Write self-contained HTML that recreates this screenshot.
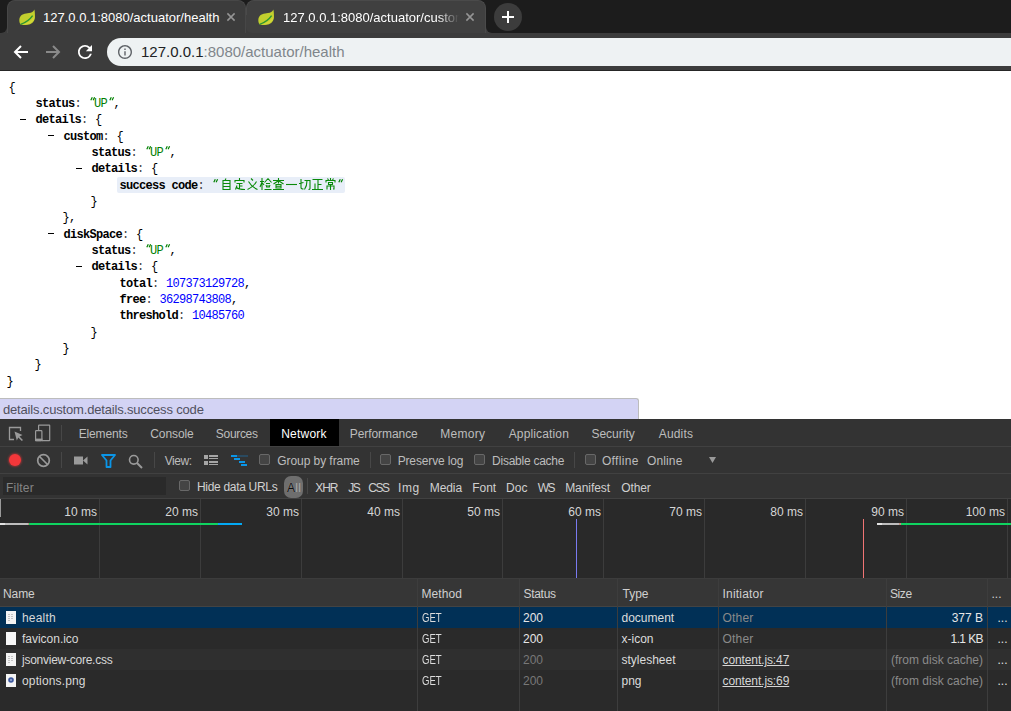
<!DOCTYPE html>
<html><head><meta charset="utf-8">
<style>
*{margin:0;padding:0;box-sizing:border-box}
html,body{width:1011px;height:711px;overflow:hidden;background:#fff;font-family:"Liberation Sans",sans-serif}
.a{position:absolute}
.ttl{position:absolute;color:#fff;font-size:13px;white-space:nowrap;overflow:hidden;line-height:16px}
.j{position:absolute;font-family:"Liberation Mono",monospace;font-size:12px;line-height:16px;color:#000;white-space:pre;letter-spacing:-0.7px}
.k{font-weight:bold}
.s{color:#008000}
.n{color:#0000ff}
.dtx{position:absolute;color:#bdbdbd;font-size:12px;line-height:14px;white-space:nowrap}
.hl{position:absolute;height:1px;background:#414141}
.vl{position:absolute;width:1px;background:#414141}
.cb{position:absolute;width:11px;height:11px;border:1px solid #686868;border-radius:2px;background:#444}
</style></head><body>
<!-- frame -->
<div class="a" style="left:0;top:0;width:1011px;height:33px;background:#1c1c1c"></div>
<!-- tab2 -->
<div class="a" style="left:478px;top:25px;width:16px;height:8px;background:#404040"></div>
<div class="a" style="left:486px;top:15px;width:8px;height:18px;background:#1c1c1c;border-bottom-left-radius:6px"></div>
<div class="a" style="left:246px;top:0;width:240px;height:33px;background:#404040;border-radius:8px 8px 0 0;border:1px solid #4a4a4a;border-bottom:none"></div>
<!-- tab1 -->
<div class="a" style="left:0;top:25px;width:254px;height:8px;background:#3c3c3c"></div>
<div class="a" style="left:0;top:15px;width:7px;height:18px;background:#1c1c1c;border-bottom-right-radius:6px"></div>
<div class="a" style="left:246px;top:15px;width:10px;height:18px;background:#404040;border-bottom-left-radius:6px"></div>
<div class="a" style="left:7px;top:0;width:239px;height:33px;background:#3c3c3c;border-radius:8px 8px 0 0;border:1px solid #474747;border-bottom:none"></div>
<!-- leaf icons -->
<svg class="a" style="left:19px;top:9px" width="17" height="17" viewBox="0 0 17 17">
<path d="M15.3,0.4 C14.5,2.5 12.5,3.6 10,4 C6,4.5 2,5 0.6,9 C-0.2,12 0.8,14.8 1.8,15.6 C4,16.2 9,16 11.5,15 C14.5,13.5 16,11 16,7.5 C16,4.5 15.8,2 15.3,0.4 Z" fill="#c2cf2e"/>
<path d="M2.5,15.6 C6,15.8 10,15.2 12.5,13.5 C14.8,11.8 15.6,9.5 15.4,7.5 C13,11 9,14 2.5,15.6 Z" fill="#d2d636"/>
<path d="M1.6,15.3 C5,14.2 9.5,12.5 13.6,6.6" stroke="#2a9632" stroke-width="1.4" fill="none"/>
</svg>
<svg class="a" style="left:258px;top:9px" width="17" height="17" viewBox="0 0 17 17">
<path d="M15.3,0.4 C14.5,2.5 12.5,3.6 10,4 C6,4.5 2,5 0.6,9 C-0.2,12 0.8,14.8 1.8,15.6 C4,16.2 9,16 11.5,15 C14.5,13.5 16,11 16,7.5 C16,4.5 15.8,2 15.3,0.4 Z" fill="#c2cf2e"/>
<path d="M2.5,15.6 C6,15.8 10,15.2 12.5,13.5 C14.8,11.8 15.6,9.5 15.4,7.5 C13,11 9,14 2.5,15.6 Z" fill="#d2d636"/>
<path d="M1.6,15.3 C5,14.2 9.5,12.5 13.6,6.6" stroke="#2a9632" stroke-width="1.4" fill="none"/>
</svg>
<div class="ttl" style="left:43px;top:10px;width:180px">127.0.0.1:8080/actuator/health</div>
<div class="ttl" style="left:283px;top:10px;width:176px;-webkit-mask-image:linear-gradient(90deg,#000 155px,transparent 176px)">127.0.0.1:8080/actuator/custom</div>
<!-- close x -->
<svg class="a" style="left:226px;top:12px" width="10" height="10" viewBox="0 0 10 10"><path d="M1.4,1.4 L8.6,8.6 M8.6,1.4 L1.4,8.6" stroke="#959595" stroke-width="1.5"/></svg>
<svg class="a" style="left:465px;top:12px" width="10" height="10" viewBox="0 0 10 10"><path d="M1.4,1.4 L8.6,8.6 M8.6,1.4 L1.4,8.6" stroke="#959595" stroke-width="1.5"/></svg>
<!-- new tab -->
<div class="a" style="left:494px;top:3px;width:28px;height:28px;border-radius:14px;background:#3c3c3c"></div>
<svg class="a" style="left:502px;top:11px" width="12" height="12" viewBox="0 0 12 12"><path d="M6,0 V12 M0,6 H12" stroke="#fff" stroke-width="2"/></svg>
<!-- toolbar -->
<div class="a" style="left:0;top:33px;width:1011px;height:37px;background:#3c3c3c"></div>
<div class="a" style="left:0;top:70px;width:1011px;height:1px;background:#262626"></div>
<svg class="a" style="left:13px;top:44px" width="16" height="16" viewBox="0 0 16 16"><path d="M15,8 H2.5 M8,2 L2,8 L8,14" stroke="#fff" stroke-width="2" fill="none"/></svg>
<svg class="a" style="left:45px;top:44px" width="16" height="16" viewBox="0 0 16 16"><path d="M1,8 H13.5 M8,2 L14,8 L8,14" stroke="#8a8a8a" stroke-width="2" fill="none"/></svg>
<svg class="a" style="left:78px;top:45px" width="14" height="14" viewBox="4 4 16 16"><path d="M17.65 6.35A7.958 7.958 0 0 0 12 4c-4.42 0-7.99 3.58-7.99 8s3.57 8 7.99 8c3.73 0 6.840-2.55 7.730-6h-2.08A5.99 5.99 0 0 1 12 18c-3.31 0-6-2.69-6-6s2.69-6 6-6c1.66 0 3.14.69 4.220 1.780L13 11h7V4l-2.35 2.35z" fill="#fff"/></svg>
<div class="a" style="left:107px;top:38px;width:930px;height:28px;background:#eef2f3;border-radius:14px"></div>
<svg class="a" style="left:118px;top:45px" width="14" height="14" viewBox="2 2 20 20"><path d="M11 7h2v2h-2zm0 4h2v6h-2zm1-9C6.48 2 2 6.48 2 12s4.48 10 10 10 10-4.48 10-10S17.52 2 12 2zm0 18c-4.410 0-8-3.590-8-8s3.590-8 8-8 8 3.590 8 8-3.590 8-8 8z" fill="#5f6368"/></svg>
<div class="a" style="left:141px;top:37px;font-size:15px;line-height:29px;white-space:nowrap;color:#202124">127.0.0.1<span style="color:#80868b">:8080/actuator/health</span></div>
<!-- page -->
<div class="a" style="left:0;top:71px;width:1011px;height:348px;background:#fff"></div>
<div class="j" style="left:8.5px;top:79.80px">{</div>
<div class="j k" style="left:35.5px;top:96.13px">status</div>
<div class="j" style="left:74.5px;top:96.13px;color:#444">:</div>
<svg class="a" style="left:89.5px;top:97.33px" width="6" height="5" viewBox="0 0 6 5"><path d="M2.3,0.3 L0.8,3.3 M4.6,0.3 L3.1,3.3" stroke="#008000" stroke-width="1.2"/></svg>
<div class="j s" style="left:94.0px;top:96.13px">UP</div>
<svg class="a" style="left:109.0px;top:97.33px" width="6" height="5" viewBox="0 0 6 5"><path d="M2.3,0.3 L0.8,3.3 M4.6,0.3 L3.1,3.3" stroke="#008000" stroke-width="1.2"/></svg>
<div class="j" style="left:113.5px;top:96.13px">,</div>
<div class="a" style="left:20px;top:119px;width:6px;height:1px;background:#000"></div>
<div class="j k" style="left:35.5px;top:112.47px">details</div>
<div class="j" style="left:81.0px;top:112.47px;color:#444">:</div>
<div class="j" style="left:95.0px;top:112.47px">{</div>
<div class="a" style="left:48px;top:135px;width:6px;height:1px;background:#000"></div>
<div class="j k" style="left:63.5px;top:128.80px">custom</div>
<div class="j" style="left:102.5px;top:128.80px;color:#444">:</div>
<div class="j" style="left:116.5px;top:128.80px">{</div>
<div class="j k" style="left:91.5px;top:145.13px">status</div>
<div class="j" style="left:130.5px;top:145.13px;color:#444">:</div>
<svg class="a" style="left:145.5px;top:146.33px" width="6" height="5" viewBox="0 0 6 5"><path d="M2.3,0.3 L0.8,3.3 M4.6,0.3 L3.1,3.3" stroke="#008000" stroke-width="1.2"/></svg>
<div class="j s" style="left:150.0px;top:145.13px">UP</div>
<svg class="a" style="left:165.0px;top:146.33px" width="6" height="5" viewBox="0 0 6 5"><path d="M2.3,0.3 L0.8,3.3 M4.6,0.3 L3.1,3.3" stroke="#008000" stroke-width="1.2"/></svg>
<div class="j" style="left:169.5px;top:145.13px">,</div>
<div class="a" style="left:76px;top:168px;width:6px;height:1px;background:#000"></div>
<div class="j k" style="left:91.5px;top:161.47px">details</div>
<div class="j" style="left:137.0px;top:161.47px;color:#444">:</div>
<div class="j" style="left:151.0px;top:161.47px">{</div>
<div class="a" style="left:117px;top:176.5px;width:228px;height:16px;background:#e8eef8;border-radius:2px"></div>
<div class="j k" style="left:119.5px;top:177.80px">success code</div>
<div class="j" style="left:197.5px;top:177.80px;color:#444">:</div>
<svg class="a" style="left:212.5px;top:179.00px" width="6" height="5" viewBox="0 0 6 5"><path d="M2.3,0.3 L0.8,3.3 M4.6,0.3 L3.1,3.3" stroke="#008000" stroke-width="1.2"/></svg>
<svg class="a" style="left:220.0px;top:178px" width="118" height="13" viewBox="0 0 118 13"><g stroke="#0a8a0a" stroke-width="1.1" fill="none"><path transform="translate(0.5,0)" d="M5.5,0.5 L4.5,2.5 M2.5,2.5 H9.5 V11.5 H2.5 Z M2.5,5.5 H9.5 M2.5,8.5 H9.5"/><path transform="translate(13.5,0)" d="M6,0 V2 M1.5,4.5 V2.5 H10.5 V4.5 M3,5.5 H9 M6,5.5 V10.5 M6,8 H9 M3.5,7.5 L2,11.5 M3,9.5 Q5,11.5 11.5,11.5"/><path transform="translate(26.5,0)" d="M4.5,0.5 L6.5,2.5 M2,3.5 Q5,9 11,11.5 M10,3.5 Q7,9 1,11.5"/><path transform="translate(39.5,0)" d="M0.5,3.5 H4.5 M2.5,0 V12 M2.5,4 L0.5,9 M3,5 L4.5,7 M8.5,0.5 L5,4.5 M8.5,0.5 L12,4.5 M6.5,5.5 H10.5 M6.5,7 L7.5,9.5 M8.5,7 V9.5 M10.5,7 L9.5,9.5 M5,11.5 H12"/><path transform="translate(52.5,0)" d="M0.5,2.5 H11.5 M6,0 V5.5 M5.5,3 L1,6 M6.5,3 L11,6 M3.5,6.5 H8.5 V10 H3.5 Z M3.5,8.2 H8.5 M0.5,11.5 H11.5"/><path transform="translate(65.5,0)" d="M0.5,6.5 H11.5"/><path transform="translate(78.5,0)" d="M0.5,5.5 L5,4.5 M2.5,1 V9.5 Q2.5,11 5,11 M6,2.5 H11.5 V10.5 Q11.5,11.5 10,11.5 M8.5,2.5 Q8.5,8 6,11.5"/><path transform="translate(91.5,0)" d="M1,1.5 H11 M6.5,1.5 V11 M6.5,6.5 H10 M3.5,5.5 V11 M0.5,11.5 H11.5"/><path transform="translate(104.5,0)" d="M6,0 V2 M3,0.5 L4,2 M9,0.5 L8,2 M1.5,4.5 V2.5 H10.5 V4.5 M4,4.5 H8 V6.5 H4 Z M2.5,11.5 V8 H9.5 V11 L8.5,11 M6,6.5 V12"/></g></svg>
<svg class="a" style="left:337.5px;top:179.00px" width="6" height="5" viewBox="0 0 6 5"><path d="M2.3,0.3 L0.8,3.3 M4.6,0.3 L3.1,3.3" stroke="#008000" stroke-width="1.2"/></svg>
<div class="j" style="left:90.5px;top:194.13px">}</div>
<div class="j" style="left:62.5px;top:210.46px">},</div>
<div class="a" style="left:48px;top:233px;width:6px;height:1px;background:#000"></div>
<div class="j k" style="left:63.5px;top:226.80px">diskSpace</div>
<div class="j" style="left:122.0px;top:226.80px;color:#444">:</div>
<div class="j" style="left:136.0px;top:226.80px">{</div>
<div class="j k" style="left:91.5px;top:243.13px">status</div>
<div class="j" style="left:130.5px;top:243.13px;color:#444">:</div>
<svg class="a" style="left:145.5px;top:244.33px" width="6" height="5" viewBox="0 0 6 5"><path d="M2.3,0.3 L0.8,3.3 M4.6,0.3 L3.1,3.3" stroke="#008000" stroke-width="1.2"/></svg>
<div class="j s" style="left:150.0px;top:243.13px">UP</div>
<svg class="a" style="left:165.0px;top:244.33px" width="6" height="5" viewBox="0 0 6 5"><path d="M2.3,0.3 L0.8,3.3 M4.6,0.3 L3.1,3.3" stroke="#008000" stroke-width="1.2"/></svg>
<div class="j" style="left:169.5px;top:243.13px">,</div>
<div class="a" style="left:76px;top:266px;width:6px;height:1px;background:#000"></div>
<div class="j k" style="left:91.5px;top:259.46px">details</div>
<div class="j" style="left:137.0px;top:259.46px;color:#444">:</div>
<div class="j" style="left:151.0px;top:259.46px">{</div>
<div class="j k" style="left:119.5px;top:275.80px">total</div>
<div class="j" style="left:152.0px;top:275.80px;color:#444">:</div>
<div class="j" style="left:166.0px;top:275.80px"><span class="n">107373129728</span>,</div>
<div class="j k" style="left:119.5px;top:292.13px">free</div>
<div class="j" style="left:145.5px;top:292.13px;color:#444">:</div>
<div class="j" style="left:159.5px;top:292.13px"><span class="n">36298743808</span>,</div>
<div class="j k" style="left:119.5px;top:308.46px">threshold</div>
<div class="j" style="left:178.0px;top:308.46px;color:#444">:</div>
<div class="j" style="left:192.0px;top:308.46px"><span class="n">10485760</span></div>
<div class="j" style="left:90.5px;top:324.80px">}</div>
<div class="j" style="left:62.5px;top:341.13px">}</div>
<div class="j" style="left:34.5px;top:357.46px">}</div>
<div class="j" style="left:6.5px;top:373.79px">}</div>
<!-- status bubble -->
<div class="a" style="left:0;top:398px;width:639px;height:21px;background:#d3d3f4;border-top:1px solid #bcbcbc;border-right:1px solid #bcbcbc;border-top-right-radius:3px"></div>
<div class="a" style="left:3px;top:402px;font-size:13px;line-height:16px;color:#50505e;white-space:nowrap;letter-spacing:-0.17px">details.custom.details.success code</div>
<!-- devtools -->
<div class="a" style="left:0;top:419px;width:1011px;height:292px;background:#333"></div>
<div class="hl" style="left:0;top:446px;width:1011px"></div>
<div class="hl" style="left:0;top:473px;width:1011px"></div>
<div class="hl" style="left:0;top:498px;width:1011px"></div>
<!-- tab bar icons -->
<svg class="a" style="left:8px;top:426px" width="16" height="16" viewBox="0 0 16 16"><path d="M6,13.5 H1.5 V1.5 H12.5 V5" stroke="#9a9a9a" stroke-width="1.3" fill="none"/><path d="M6.5,5.5 L14.5,9 L11.5,10.5 L15,14 L13.8,15 L10.3,11.6 L8.8,14.5 Z" fill="#9a9a9a"/></svg>
<svg class="a" style="left:34px;top:424px" width="17" height="18" viewBox="0 0 17 18"><path d="M4.6,6 V1.6 Q4.6,1.1 5.1,1.1 H15.2 Q15.7,1.1 15.7,1.6 V16.2 Q15.7,16.7 15.2,16.7 H8" stroke="#9a9a9a" stroke-width="1.2" fill="none"/><rect x="1.6" y="6.6" width="6.3" height="10" rx="0.8" stroke="#9a9a9a" stroke-width="1.2" fill="none"/><rect x="1" y="14.6" width="7.5" height="2.6" fill="#9a9a9a"/></svg>
<div class="vl" style="left:61px;top:425px;height:16px;background:#474747"></div>
<div class="a" style="left:270px;top:419px;width:69px;height:27px;background:#000"></div>
<!-- row2 -->
<div class="a" style="left:9px;top:454px;width:12px;height:12px;border-radius:6px;background:#f3373a;box-shadow:0 0 2px 1px rgba(243,55,58,.45)"></div>
<svg class="a" style="left:36px;top:453px" width="15" height="15" viewBox="0 0 15 15"><circle cx="7.5" cy="7.5" r="5.8" stroke="#9a9a9a" stroke-width="1.7" fill="none"/><path d="M3.5,3.5 L11.5,11.5" stroke="#9a9a9a" stroke-width="1.7"/></svg>
<div class="vl" style="left:61px;top:452px;height:16px;background:#474747"></div>
<svg class="a" style="left:74px;top:456px" width="14" height="9" viewBox="0 0 14 9"><rect x="0" y="0.5" width="9" height="8" fill="#9a9a9a"/><path d="M9,4.5 L13.5,0.5 V8.5 Z" fill="#9a9a9a"/></svg>
<svg class="a" style="left:101px;top:454px" width="15" height="14" viewBox="0 0 15 14"><path d="M1,1 H14 L9.5,6.5 V13 H5.5 V6.5 Z" stroke="#0b95e6" stroke-width="1.8" fill="none" stroke-linejoin="round"/></svg>
<svg class="a" style="left:128px;top:454px" width="15" height="15" viewBox="0 0 15 15"><circle cx="5.8" cy="5.8" r="4.3" stroke="#9a9a9a" stroke-width="1.6" fill="none"/><path d="M9,9 L14,14" stroke="#9a9a9a" stroke-width="2"/></svg>
<div class="vl" style="left:154px;top:452px;height:16px;background:#474747"></div>
<svg class="a" style="left:204px;top:455px" width="14" height="11" viewBox="0 0 14 11"><path d="M0,0 H4 V4 H0 Z M5,0 H14 V2 H5 Z M5,3 H14 V4 H5 Z M0,6 H4 V10 H0 Z M5,6 H14 V8 H5 Z M5,9 H14 V10 H5 Z" fill="#a6a6a6"/></svg>
<svg class="a" style="left:231px;top:455px" width="17" height="12" viewBox="0 0 17 12"><path d="M6,0 H17 V2 H6 Z" fill="#2a4a60"/><path d="M0,0 H6 V2 H0 Z M3,3 H9 V5 H3 Z M8,6 H14 V8 H8 Z M10,9 H16 V11 H10 Z" fill="#0b95e6"/></svg>
<div class="cb" style="left:259px;top:454px"></div>
<div class="vl" style="left:370px;top:452px;height:16px;background:#474747"></div>
<div class="cb" style="left:380px;top:454px"></div>
<div class="cb" style="left:474px;top:454px"></div>
<div class="vl" style="left:574px;top:452px;height:16px;background:#474747"></div>
<div class="cb" style="left:585px;top:454px"></div>
<svg class="a" style="left:709px;top:457px" width="7" height="6" viewBox="0 0 7 6"><path d="M0,0 H7 L3.5,6 Z" fill="#9a9a9a"/></svg>
<!-- row3 -->
<div class="a" style="left:3px;top:477px;width:163px;height:18px;background:#2a2a2a"></div>
<div class="dtx" style="left:6px;top:481px;color:#858585;letter-spacing:0.2px">Filter</div>
<div class="cb" style="left:179px;top:480px"></div>
<div class="a" style="left:284px;top:476px;width:19px;height:22px;background:#6e6e6e;border-radius:7px"></div>
<div class="dtx" style="left:287px;top:481px;color:#111;letter-spacing:0.3px;text-shadow:0 0 1px rgba(255,255,255,.35)">A<span style="color:#a8a8a8;text-shadow:none">ll</span></div>
<div class="vl" style="left:307px;top:478px;height:16px;background:#474747"></div>
<!-- timeline -->
<div class="a" style="left:0;top:499px;width:1011px;height:80px;background:#292929"></div>
<div class="vl" style="left:0;top:499px;height:18px;background:#9a9a9a"></div>
<div class="dtx" id="f0" style="left:78.74px;top:427px;color:#bdbdbd;letter-spacing:-0.154px">Elements</div>
<div class="dtx" id="f1" style="left:150.26px;top:427px;color:#bdbdbd;letter-spacing:-0.087px">Console</div>
<div class="dtx" id="f2" style="left:215.84px;top:427px;color:#bdbdbd;letter-spacing:-0.313px">Sources</div>
<div class="dtx" id="f3" style="left:281.16px;top:427px;color:#ffffff;letter-spacing:0.240px">Network</div>
<div class="dtx" id="f4" style="left:349.74px;top:427px;color:#bdbdbd;letter-spacing:-0.068px">Performance</div>
<div class="dtx" id="f5" style="left:440.16px;top:427px;color:#bdbdbd;letter-spacing:0.320px">Memory</div>
<div class="dtx" id="f6" style="left:508.68px;top:427px;color:#bdbdbd;letter-spacing:0.144px">Application</div>
<div class="dtx" id="f7" style="left:591.42px;top:427px;color:#bdbdbd;letter-spacing:-0.006px">Security</div>
<div class="dtx" id="f8" style="left:658.74px;top:427px;color:#bdbdbd;letter-spacing:0.176px">Audits</div>
<div class="dtx" id="f9" style="left:164.66px;top:454px;color:#bdbdbd;letter-spacing:-0.440px">View:</div>
<div class="dtx" id="f10" style="left:277.26px;top:454px;color:#bdbdbd;letter-spacing:-0.065px">Group by frame</div>
<div class="dtx" id="f11" style="left:397.66px;top:454px;color:#bdbdbd;letter-spacing:-0.142px">Preserve log</div>
<div class="dtx" id="f12" style="left:492.10px;top:454px;color:#bdbdbd;letter-spacing:-0.250px">Disable cache</div>
<div class="dtx" id="f13" style="left:601.92px;top:454px;color:#bdbdbd;letter-spacing:0.360px">Offline</div>
<div class="dtx" id="f14" style="left:646.92px;top:454px;color:#bdbdbd;letter-spacing:0.144px">Online</div>
<div class="dtx" id="f15" style="left:196.92px;top:480px;color:#d0d0d0;letter-spacing:-0.305px">Hide data URLs</div>
<div class="dtx" id="f16" style="left:315.26px;top:481px;color:#d0d0d0;letter-spacing:-1.040px">XHR</div>
<div class="dtx" id="f17" style="left:348.26px;top:481px;color:#d0d0d0;letter-spacing:-1.500px">JS</div>
<div class="dtx" id="f18" style="left:368.34px;top:481px;color:#d0d0d0;letter-spacing:-1.500px">CSS</div>
<div class="dtx" id="f19" style="left:398.00px;top:481px;color:#d0d0d0;letter-spacing:0.640px">Img</div>
<div class="dtx" id="f20" style="left:429.84px;top:481px;color:#d0d0d0;letter-spacing:-0.110px">Media</div>
<div class="dtx" id="f21" style="left:472.16px;top:481px;color:#d0d0d0;letter-spacing:-0.000px">Font</div>
<div class="dtx" id="f22" style="left:505.92px;top:481px;color:#d0d0d0;letter-spacing:0.120px">Doc</div>
<div class="dtx" id="f23" style="left:537.74px;top:481px;color:#d0d0d0;letter-spacing:-1.500px">WS</div>
<div class="dtx" id="f24" style="left:565.16px;top:481px;color:#d0d0d0;letter-spacing:-0.063px">Manifest</div>
<div class="dtx" id="f25" style="left:621.26px;top:481px;color:#d0d0d0;letter-spacing:-0.100px">Other</div>
<div class="vl" style="left:99px;top:499px;height:80px;background:#3c3c3c"></div>
<div class="dtx" style="left:19px;top:505px;width:78px;text-align:right;color:#d6d6d6">10 ms</div>
<div class="vl" style="left:200px;top:499px;height:80px;background:#3c3c3c"></div>
<div class="dtx" style="left:120px;top:505px;width:78px;text-align:right;color:#d6d6d6">20 ms</div>
<div class="vl" style="left:301px;top:499px;height:80px;background:#3c3c3c"></div>
<div class="dtx" style="left:221px;top:505px;width:78px;text-align:right;color:#d6d6d6">30 ms</div>
<div class="vl" style="left:402px;top:499px;height:80px;background:#3c3c3c"></div>
<div class="dtx" style="left:322px;top:505px;width:78px;text-align:right;color:#d6d6d6">40 ms</div>
<div class="vl" style="left:502px;top:499px;height:80px;background:#3c3c3c"></div>
<div class="dtx" style="left:422px;top:505px;width:78px;text-align:right;color:#d6d6d6">50 ms</div>
<div class="vl" style="left:603px;top:499px;height:80px;background:#3c3c3c"></div>
<div class="dtx" style="left:523px;top:505px;width:78px;text-align:right;color:#d6d6d6">60 ms</div>
<div class="vl" style="left:704px;top:499px;height:80px;background:#3c3c3c"></div>
<div class="dtx" style="left:624px;top:505px;width:78px;text-align:right;color:#d6d6d6">70 ms</div>
<div class="vl" style="left:805px;top:499px;height:80px;background:#3c3c3c"></div>
<div class="dtx" style="left:725px;top:505px;width:78px;text-align:right;color:#d6d6d6">80 ms</div>
<div class="vl" style="left:906px;top:499px;height:80px;background:#3c3c3c"></div>
<div class="dtx" style="left:826px;top:505px;width:78px;text-align:right;color:#d6d6d6">90 ms</div>
<div class="vl" style="left:1007px;top:499px;height:80px;background:#3c3c3c"></div>
<div class="dtx" style="left:927px;top:505px;width:78px;text-align:right;color:#d6d6d6">100 ms</div>
<div class="a" style="left:0;top:523px;width:5px;height:2px;background:#e2e2e2"></div>
<div class="a" style="left:5px;top:523px;width:23px;height:2px;background:#bdbdbd"></div>
<div class="a" style="left:28px;top:523px;width:1px;height:2px;background:#c09080"></div>
<div class="a" style="left:29px;top:523px;width:189px;height:2px;background:#0fd460"></div>
<div class="a" style="left:218px;top:523px;width:23.5px;height:2px;background:#03a9f4"></div>
<div class="a" style="left:877px;top:523px;width:5px;height:2px;background:#e2e2e2"></div>
<div class="a" style="left:882px;top:523px;width:17px;height:2px;background:#bdbdbd"></div>
<div class="a" style="left:899px;top:523px;width:2px;height:2px;background:#c09080"></div>
<div class="a" style="left:901px;top:523px;width:110px;height:2px;background:#0fd460"></div>
<div class="a" style="left:576px;top:519px;width:1px;height:60px;background:#7a7af0"></div>
<div class="a" style="left:863px;top:519px;width:1px;height:60px;background:#f07474"></div>
<div class="hl" style="left:0;top:578px;width:1011px;background:#3c3c3c"></div>
<div class="a" style="left:0;top:579px;width:1011px;height:27px;background:#363636"></div>
<div class="a" style="left:0;top:606px;width:1011px;height:1px;background:#434343"></div>
<div class="a" style="left:0;top:607px;width:1011px;height:104px;background:#2a2a2a"></div>
<div class="a" style="left:0;top:607px;width:1011px;height:21px;background:#013056"></div>
<div class="a" style="left:0;top:628px;width:1011px;height:21px;background:#2a2a2a"></div>
<div class="a" style="left:0;top:649px;width:1011px;height:21px;background:#2f2f2f"></div>
<div class="a" style="left:0;top:670px;width:1011px;height:21px;background:#2a2a2a"></div>
<div class="vl" style="left:417px;top:579px;height:132px;background:#3d3d3d"></div>
<div class="vl" style="left:519px;top:579px;height:132px;background:#3d3d3d"></div>
<div class="vl" style="left:617px;top:579px;height:132px;background:#3d3d3d"></div>
<div class="vl" style="left:718px;top:579px;height:132px;background:#3d3d3d"></div>
<div class="vl" style="left:886px;top:579px;height:132px;background:#3d3d3d"></div>
<div class="vl" style="left:987px;top:579px;height:132px;background:#3d3d3d"></div>
<div class="dtx" style="left:3px;top:587px;color:#d0d0d0;letter-spacing:-0.1px">Name</div>
<div class="dtx" style="left:421.5px;top:587px;color:#d0d0d0;letter-spacing:0.1px">Method</div>
<div class="dtx" style="left:523.5px;top:587px;color:#d0d0d0;letter-spacing:-0.3px">Status</div>
<div class="dtx" style="left:622.5px;top:587px;color:#d0d0d0;letter-spacing:0px">Type</div>
<div class="dtx" style="left:722.5px;top:587px;color:#d0d0d0;letter-spacing:0.2px">Initiator</div>
<div class="dtx" style="left:890px;top:587px;color:#d0d0d0;letter-spacing:-0.4px">Size</div>
<div class="dtx" style="left:991.5px;top:587px;color:#d0d0d0;letter-spacing:0px">...</div>
<div class="dtx" style="left:22px;top:611px;color:#d8d8d8;letter-spacing:0.2px">health</div>
<div class="dtx" style="left:421.5px;top:611px;color:#dcdcdc;transform:scaleX(0.8);transform-origin:0 0">GET</div>
<div class="dtx" style="left:523px;top:611px;color:#e6e6e6">200</div>
<div class="dtx" style="left:621.5px;top:611px;color:#dcdcdc;letter-spacing:0px">document</div>
<div class="dtx" style="left:722.5px;top:611px;color:#8a8a8a;letter-spacing:0.2px">Other</div>
<div class="dtx" style="left:780px;top:611px;width:203px;text-align:right;color:#e6e6e6;letter-spacing:0px">377 B</div>
<div class="dtx" style="left:997.5px;top:611px;color:#e0e0e0">...</div>
<div class="a" style="left:6px;top:611px;width:10px;height:13px;background:#f4f4f4"></div>
<svg class="a" style="left:6px;top:611px" width="10" height="13" viewBox="0 0 10 13"><path d="M2,3.5 H8 M2,5.5 H8 M2,7.5 H8 M2,9.5 H5" stroke="#c4c4c4" stroke-width="1" stroke-dasharray="2,1"/></svg>
<div class="dtx" style="left:22px;top:632px;color:#d8d8d8;letter-spacing:-0.02px">favicon.ico</div>
<div class="dtx" style="left:421.5px;top:632px;color:#dcdcdc;transform:scaleX(0.8);transform-origin:0 0">GET</div>
<div class="dtx" style="left:523px;top:632px;color:#e6e6e6">200</div>
<div class="dtx" style="left:621.5px;top:632px;color:#dcdcdc;letter-spacing:0px">x-icon</div>
<div class="dtx" style="left:722.5px;top:632px;color:#8a8a8a;letter-spacing:0.2px">Other</div>
<div class="dtx" style="left:780px;top:632px;width:203px;text-align:right;color:#e6e6e6;letter-spacing:-0.6px">1.1 KB</div>
<div class="dtx" style="left:997.5px;top:632px;color:#e0e0e0">...</div>
<div class="a" style="left:6px;top:632px;width:10px;height:13px;background:#f7f7f7"></div>
<div class="dtx" style="left:22px;top:653px;color:#d8d8d8;letter-spacing:-0.25px">jsonview-core.css</div>
<div class="dtx" style="left:421.5px;top:653px;color:#dcdcdc;transform:scaleX(0.8);transform-origin:0 0">GET</div>
<div class="dtx" style="left:523px;top:653px;color:#787878">200</div>
<div class="dtx" style="left:621.5px;top:653px;color:#dcdcdc;letter-spacing:0px">stylesheet</div>
<div class="dtx" style="left:722.5px;top:653px;color:#d6d6d6;text-decoration:underline;letter-spacing:-0.1px">content.js:47</div>
<div class="dtx" style="left:780px;top:653px;width:203px;text-align:right;color:#8a8a8a;letter-spacing:0px">(from disk cache)</div>
<div class="dtx" style="left:997.5px;top:653px;color:#e0e0e0">...</div>
<div class="a" style="left:6px;top:653px;width:10px;height:13px;background:#f4f4f4"></div>
<svg class="a" style="left:6px;top:653px" width="10" height="13" viewBox="0 0 10 13"><path d="M2,3.5 H8 M2,5.5 H8 M2,7.5 H8 M2,9.5 H5" stroke="#c4c4c4" stroke-width="1" stroke-dasharray="2,1"/></svg>
<div class="dtx" style="left:22px;top:674px;color:#d8d8d8;letter-spacing:0.14px">options.png</div>
<div class="dtx" style="left:421.5px;top:674px;color:#dcdcdc;transform:scaleX(0.8);transform-origin:0 0">GET</div>
<div class="dtx" style="left:523px;top:674px;color:#787878">200</div>
<div class="dtx" style="left:621.5px;top:674px;color:#dcdcdc;letter-spacing:0px">png</div>
<div class="dtx" style="left:722.5px;top:674px;color:#d6d6d6;text-decoration:underline;letter-spacing:-0.1px">content.js:69</div>
<div class="dtx" style="left:780px;top:674px;width:203px;text-align:right;color:#8a8a8a;letter-spacing:0px">(from disk cache)</div>
<div class="dtx" style="left:997.5px;top:674px;color:#e0e0e0">...</div>
<div class="a" style="left:6px;top:674px;width:10px;height:13px;background:#f4f4f4"></div><svg class="a" style="left:6px;top:674px" width="10" height="13" viewBox="0 0 10 13"><circle cx="5" cy="6" r="2.8" fill="#3f5aa0"/><circle cx="5" cy="6" r="1" fill="#9fb0d8"/></svg>
</body></html>
